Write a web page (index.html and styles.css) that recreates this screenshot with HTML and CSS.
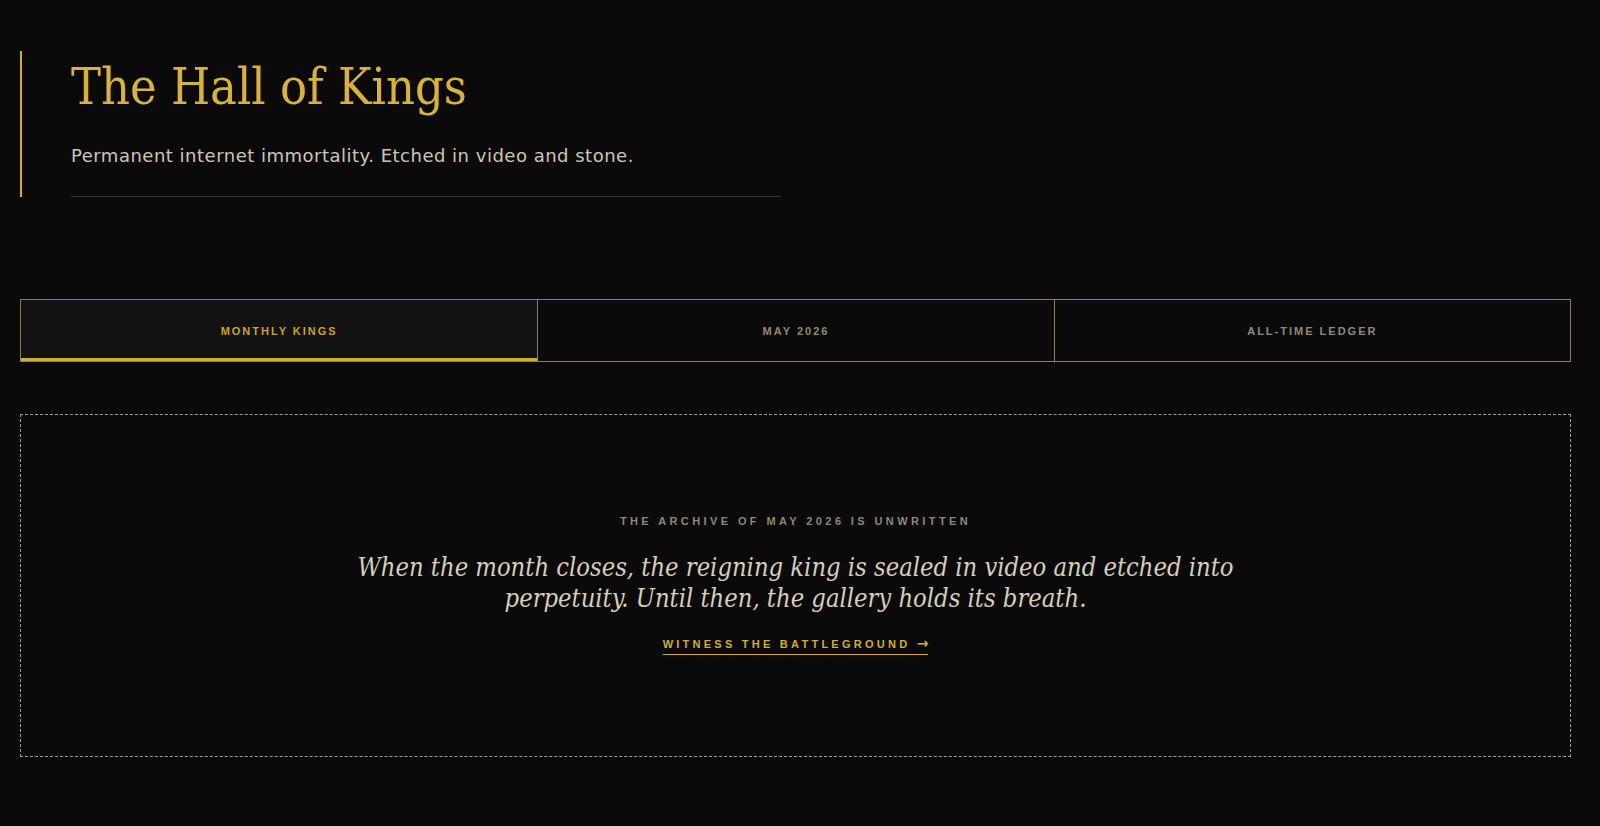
FILE: index.html
```html
<!DOCTYPE html>
<html lang="en">
<head>
<meta charset="utf-8">
<title>The Hall of Kings</title>
<link rel="stylesheet" href="styles.css">
</head>
<body>
<main class="page">
  <header class="hero">
    <h1 class="hero-title">The Hall of Kings</h1>
    <p class="hero-sub">Permanent internet immortality. Etched in video and stone.</p>
    <div class="hero-rule"></div>
  </header>

  <nav class="tabs">
    <button class="tab tab-active">MONTHLY KINGS</button>
    <button class="tab">MAY 2026</button>
    <button class="tab">ALL-TIME LEDGER</button>
  </nav>

  <section class="empty">
    <div class="empty-label">THE ARCHIVE OF MAY 2026 IS UNWRITTEN</div>
    <p class="empty-quote">When the month closes, the reigning king is sealed in video and etched into perpetuity. Until then, the gallery holds its breath.</p>
    <a class="empty-link" href="#">WITNESS THE BATTLEGROUND <span class="arrow">→</span></a>
  </section>
</main>
</body>
</html>
```

FILE: styles.css
```css
* { box-sizing: border-box; }
html, body { margin: 0; padding: 0; background: #0a0a0a; }
body { font-family: "Liberation Sans", Arial, sans-serif; color: #d6cdb6; }

.page { padding: 51px 29px 0 20px; }

.hero {
  border-left: 2px solid #d4ad34;
  padding: 0 0 0 49px;
  width: 761px;
  height: 146px;
  display: flex;
  flex-direction: column;
}
.hero-title {
  margin: 5px 0 0 0;
  font-family: "DejaVu Serif Condensed", "DejaVu Serif", serif;
  font-weight: 400;
  font-size: 50px;
  line-height: 62px;
  color: #d9b23a;
}
.hero-sub {
  margin: 24px 0 0 0;
  font-family: "DejaVu Sans", sans-serif;
  font-size: 18px;
  letter-spacing: 0.5px;
  line-height: 28px;
  color: #cfc6b0;
}
.hero-rule {
  margin-top: auto;
  height: 1px;
  background: #3a3733;
}

.tabs {
  margin-top: 102px;
  display: grid;
  grid-template-columns: 1fr 1fr 1fr;
  border: 1px solid #8c7b60;
}
.tab {
  height: 61px;
  background: #0a0a0a;
  border: none;
  border-left: 1px solid #8c7b60;
  font-family: "Liberation Sans", Arial, sans-serif;
  font-weight: 700;
  font-size: 11px;
  letter-spacing: 2px;
  color: #8e8a78;
  padding: 0;
}
.tab:first-child { border-left: none; }
.tab-active {
  background: #121212;
  color: #c9a22e;
  border-bottom: 3px solid #d4ad34;
  padding-top: 3px;
}

.empty {
  margin-top: 52px;
  height: 343px;
  padding-bottom: 3px;
  border: 1px dashed #a39c88;
  display: flex;
  flex-direction: column;
  align-items: center;
  justify-content: center;
  text-align: center;
}
.empty-label {
  font-weight: 700;
  font-size: 11px;
  line-height: 14px;
  letter-spacing: 3.4px;
  color: #8d8873;
}
.empty-quote {
  margin: 24px 0 0 0;
  max-width: 900px;
  font-family: "DejaVu Serif Condensed", "DejaVu Serif", serif;
  font-style: italic;
  font-size: 25.3px;
  line-height: 31px;
  color: #d8cfb8;
}
.empty-link {
  margin-top: 22px;
  font-weight: 700;
  font-size: 11px;
  line-height: 14px;
  letter-spacing: 3.25px;
  color: #d4ad34;
  text-decoration: none;
  border-bottom: 1px solid #d4ad34;
  padding-bottom: 3px;
}
.arrow {
  font-family: "DejaVu Sans", sans-serif;
  font-size: 14px;
  letter-spacing: 0;
}
```
